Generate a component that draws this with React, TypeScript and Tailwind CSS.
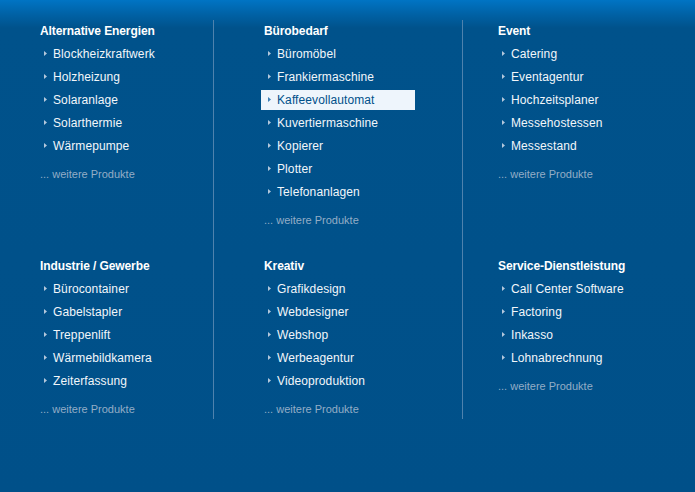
type Section = {
    title: string;
    items: string[];
};

type Column = {
    width: string;
    pad: string;
    divider: boolean;
    sections: [Section, Section];
};

const columns: Column[] = [
    {
        width: 'w-[214px]',
        pad: 'pl-[40px]',
        divider: true,
        sections: [
            {
                title: 'Alternative Energien',
                items: ['Blockheizkraftwerk', 'Holzheizung', 'Solaranlage', 'Solarthermie', 'Wärmepumpe'],
            },
            {
                title: 'Industrie / Gewerbe',
                items: ['Bürocontainer', 'Gabelstapler', 'Treppenlift', 'Wärmebildkamera', 'Zeiterfassung'],
            },
        ],
    },
    {
        width: 'w-[249px]',
        pad: 'pl-[50px]',
        divider: true,
        sections: [
            {
                title: 'Bürobedarf',
                items: [
                    'Büromöbel',
                    'Frankiermaschine',
                    'Kaffeevollautomat',
                    'Kuvertiermaschine',
                    'Kopierer',
                    'Plotter',
                    'Telefonanlagen',
                ],
            },
            {
                title: 'Kreativ',
                items: ['Grafikdesign', 'Webdesigner', 'Webshop', 'Werbeagentur', 'Videoproduktion'],
            },
        ],
    },
    {
        width: 'flex-1',
        pad: 'pl-[35px]',
        divider: false,
        sections: [
            {
                title: 'Event',
                items: ['Catering', 'Eventagentur', 'Hochzeitsplaner', 'Messehostessen', 'Messestand'],
            },
            {
                title: 'Service-Dienstleistung',
                items: ['Call Center Software', 'Factoring', 'Inkasso', 'Lohnabrechnung'],
            },
        ],
    },
];

const ACTIVE = 'Kaffeevollautomat';

// small right-pointing bullet
function Arrow({ active }: { active: boolean }) {
    return (
        <svg width="3" height="5" viewBox="0 0 3 5" className="shrink-0">
            <path d="M0 0 L3 2.5 L0 5 Z" fill={active ? '#3f7fb5' : '#b4c8dc'} />
        </svg>
    );
}

function Block({ section }: { section: Section }) {
    return (
        <div className="flex flex-col">
            <h3 className="h-[20px] text-[12px] font-bold leading-[22px] tracking-[-0.1px] text-white">
                {section.title}
            </h3>

            <ul className="mt-[2px] flex flex-col">
                {section.items.map(item => {
                    const active = item === ACTIVE;

                    return (
                        <li key={item} className="flex h-[23px] items-center">
                            <a
                                href="#"
                                className={`-ml-[3px] flex h-[20px] w-[154px] items-center gap-[6px] pl-[7px] text-[12px] tracking-[0.1px] ${
                                    active ? 'bg-[#eef5fc] text-[#00508a]' : 'text-[#f2f6fa]'
                                }`}
                            >
                                <Arrow active={active} />
                                {item}
                            </a>
                        </li>
                    );
                })}
            </ul>

            <a href="#" className="mt-[10px] text-[11px] leading-[14px] text-[#93adc6]">
                ... weitere Produkte
            </a>
        </div>
    );
}

export default function App() {
    return (
        <div
            className="min-h-[492px] w-full bg-[linear-gradient(to_bottom,#0074c4_0px,#0062a6_14px,#00528b_28px,#005089_100%)] pt-[20px]"
            style={{ fontFamily: '"Liberation Sans", Arial, sans-serif' }}
        >
            <div className="flex">
                {columns.map(col => (
                    <div
                        key={col.sections[0].title}
                        className={`${col.width} ${col.pad} ${
                            col.divider ? 'border-r border-[#4f82ad]' : ''
                        } flex h-[399px] flex-col`}
                    >
                        <div className="flex h-[235px] flex-col">
                            <Block section={col.sections[0]} />
                        </div>
                        <Block section={col.sections[1]} />
                    </div>
                ))}
            </div>
        </div>
    );
}
